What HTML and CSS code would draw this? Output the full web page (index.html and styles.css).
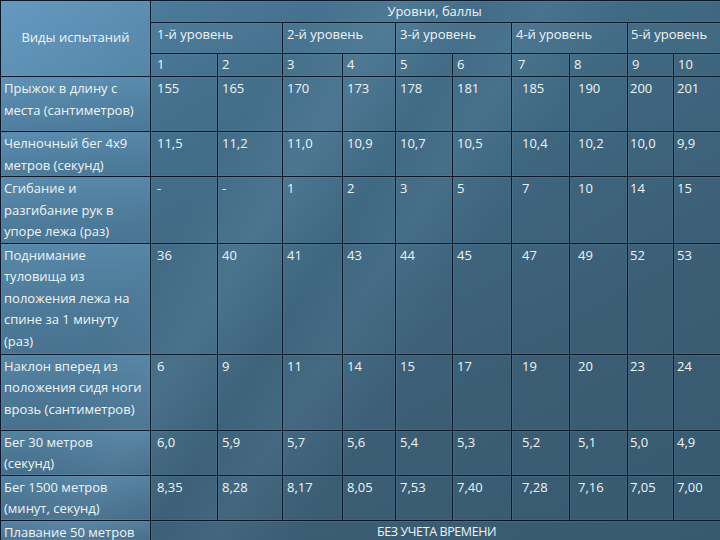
FILE: index.html
```html
<!DOCTYPE html>
<html lang="ru">
<head>
<meta charset="utf-8">
<title>Уровни, баллы</title>
<link rel="stylesheet" href="styles.css">
</head>
<body>
<div class="slide">
<table class="norms">
<colgroup>
<col class="c0"><col class="c1"><col class="c2"><col class="c3"><col class="c4"><col class="c5"><col class="c6"><col class="c7"><col class="c8"><col class="c9"><col class="c10">
</colgroup>
<thead>
<tr class="h1">
<td class="name corner" rowspan="3">Виды испытаний</td>
<td class="title" colspan="10">Уровни, баллы</td>
</tr>
<tr class="h2">
<td class="lvl l1" colspan="2">1-й уровень</td>
<td class="lvl" colspan="2">2-й уровень</td>
<td class="lvl" colspan="2">3-й уровень</td>
<td class="lvl" colspan="2">4-й уровень</td>
<td class="lvl l5" colspan="2">5-й уровень</td>
</tr>
<tr class="h3 nums">
<td>1</td><td>2</td><td>3</td><td>4</td><td>5</td><td>6</td><td>7</td><td>8</td><td>9</td><td>10</td>
</tr>
</thead>
<tbody>
<tr class="r1 data">
<td class="name">Прыжок в длину с места (сантиметров)</td>
<td>155</td><td>165</td><td>170</td><td>173</td><td>178</td><td>181</td><td>185</td><td>190</td><td>200</td><td>201</td>
</tr>
<tr class="r2 data">
<td class="name">Челночный бег 4х9 метров (секунд)</td>
<td>11,5</td><td>11,2</td><td>11,0</td><td>10,9</td><td>10,7</td><td>10,5</td><td>10,4</td><td>10,2</td><td>10,0</td><td>9,9</td>
</tr>
<tr class="r3 data">
<td class="name">Сгибание и разгибание рук в упоре лежа (раз)</td>
<td>-</td><td>-</td><td>1</td><td>2</td><td>3</td><td>5</td><td>7</td><td>10</td><td>14</td><td>15</td>
</tr>
<tr class="r4 data">
<td class="name">Поднимание туловища из положения лежа на спине за 1 минуту (раз)</td>
<td>36</td><td>40</td><td>41</td><td>43</td><td>44</td><td>45</td><td>47</td><td>49</td><td>52</td><td>53</td>
</tr>
<tr class="r5 data">
<td class="name">Наклон вперед из положения сидя ноги врозь (сантиметров)</td>
<td>6</td><td>9</td><td>11</td><td>14</td><td>15</td><td>17</td><td>19</td><td>20</td><td>23</td><td>24</td>
</tr>
<tr class="r6 data">
<td class="name">Бег 30 метров (секунд)</td>
<td>6,0</td><td>5,9</td><td>5,7</td><td>5,6</td><td>5,4</td><td>5,3</td><td>5,2</td><td>5,1</td><td>5,0</td><td>4,9</td>
</tr>
<tr class="r7 data">
<td class="name">Бег 1500 метров (минут, секунд)</td>
<td>8,35</td><td>8,28</td><td>8,17</td><td>8,05</td><td>7,53</td><td>7,40</td><td>7,28</td><td>7,16</td><td>7,05</td><td>7,00</td>
</tr>
<tr class="r8">
<td class="name">Плавание 50 метров</td>
<td class="note" colspan="10">БЕЗ УЧЕТА ВРЕМЕНИ</td>
</tr>
</tbody>
</table>
</div>
</body>
</html>
```

FILE: styles.css
```css
html, body {
  margin: 0;
  padding: 0;
}

body {
  width: 720px;
  height: 540px;
  overflow: hidden;
  background: #3d5f76;
}

.slide {
  width: 720px;
  height: 540px;
  overflow: hidden;
  background:
    linear-gradient(122deg, rgba(255,255,255,0) 30%, rgba(170,210,240,0.10) 38%, rgba(255,255,255,0) 46%, rgba(170,210,240,0.07) 52%, rgba(255,255,255,0) 60%),
    linear-gradient(150deg, #5183a6 0%, #44708c 22%, #3f6780 45%, #3b5e75 70%, #385a70 100%);
  font-family: "Open Sans", "Noto Sans", sans-serif;
  font-size: 13px;
  color: #eef4f8;
}

.norms {
  width: 722px;
  table-layout: fixed;
  border-collapse: collapse;
  margin: 0;
}

.c0 { width: 150px; }
.c1 { width: 67px; }
.c2 { width: 65px; }
.c3 { width: 60px; }
.c4 { width: 53px; }
.c5 { width: 57px; }
.c6 { width: 59px; }
.c7 { width: 58px; }
.c8 { width: 58px; }
.c9 { width: 46px; }
.c10 { width: 49px; }

.norms td {
  border: 1px solid #0a1829;
  padding: 1px 0 0 4px;
  vertical-align: top;
  line-height: 21.5px;
  white-space: normal;
  box-shadow: inset 1px 1px 0 rgba(160,200,225,0.10), inset -1px -1px 0 rgba(160,200,225,0.08);
}

.norms td.name {
  padding-left: 3px;
  padding-right: 7px;
  background: linear-gradient(180deg, rgba(130,190,235,0.32) 0%, rgba(120,175,220,0.24) 50%, rgba(110,160,205,0.17) 100%);
}

.norms td.corner {
  vertical-align: middle;
  text-align: center;
  padding: 0 0 4px 0;
  line-height: 20px;
  background: linear-gradient(135deg, rgba(140,195,240,0.34), rgba(120,180,225,0.27));
}

.h1 { height: 22px; }
.h2 { height: 31px; }
.h3 { height: 23px; }
.r1 { height: 55px; }
.r2 { height: 45px; }
.r3 { height: 66px; }
.r4 { height: 111px; }
.r5 { height: 76px; }
.r6 { height: 44px; }
.r7 { height: 45px; }
.r8 { height: 30px; }

.norms td.title {
  text-align: center;
  padding: 0 4px 0 0;
  line-height: 20px;
  vertical-align: top;
}

.norms td.lvl {
  padding-top: 1px;
  padding-left: 4px;
  line-height: 20px;
  background: rgba(120,170,210,0.06);
}

.norms td.lvl.l1 { padding-left: 6px; }
.norms td.lvl.l5 { padding-left: 3px; }

.nums td { padding-top: 0; line-height: 20px; }
.nums td:nth-child(1) { padding-left: 6px; }
.nums td:nth-child(7) { padding-left: 6px; }

.data td:nth-child(2) { padding-left: 6px; }
.data td:nth-child(8) { padding-left: 10px; }
.data td:nth-child(9) { padding-left: 8px; }
.data td:nth-child(10) { padding-left: 2px; }
.data td:nth-child(11) { padding-left: 3px; }

.norms td.note {
  text-align: center;
  padding: 0;
  line-height: 22px;
  font-size: 12.5px;
  letter-spacing: -0.4px;
  border-bottom: none;
}
```
